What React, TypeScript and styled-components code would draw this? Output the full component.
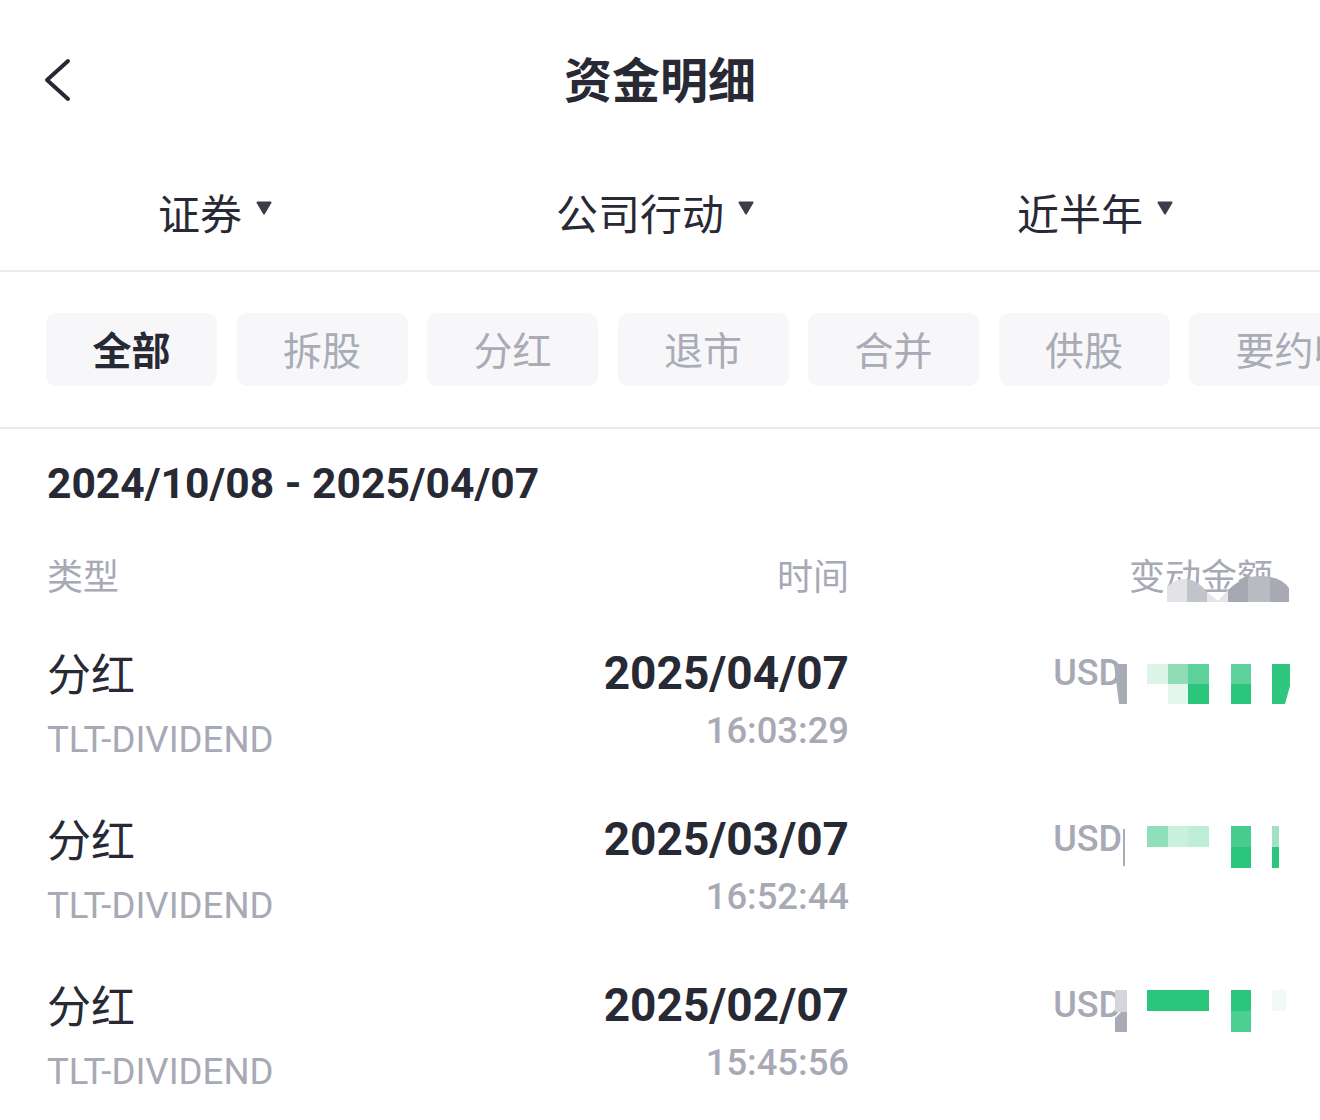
import React from "react";
import styled, { createGlobalStyle } from "styled-components";

const GlobalStyle = createGlobalStyle`
  html, body { margin: 0; padding: 0; background: #ffffff; }
  body { font-family: Roboto, "Noto Sans CJK SC", sans-serif; -webkit-font-smoothing: antialiased; }
  * { box-sizing: border-box; }
`;

const CJK = `"Noto Sans CJK SC", "Noto Sans", sans-serif`;
const NUM = `Roboto, "Noto Sans CJK SC", sans-serif`;
const DARK = "#272934";
const GRAY = "#a7a9b5";

const Page = styled.div`
  width: 1320px;
  min-height: 1120px;
  overflow: hidden;
  background: #fff;
`;

const Header = styled.header`
  height: 160px;
  padding-bottom: 6px;
  display: grid;
  grid-template-columns: 160px 1fr 160px;
  align-items: center;
`;

const BackButton = styled.button`
  border: 0;
  background: transparent;
  padding: 0 0 0 42px;
  width: 100px;
  height: 60px;
  display: flex;
  align-items: center;
  cursor: pointer;
  margin-top: 6px;
`;

const Title = styled.h1`
  margin: 0;
  text-align: center;
  font-family: ${CJK};
  font-size: 48px;
  font-weight: 700;
  line-height: 60px;
  color: ${DARK};
`;

const FilterBar = styled.div`
  height: 112px;
  padding-bottom: 6px;
  display: grid;
  grid-template-columns: repeat(3, 1fr);
  align-items: center;
  border-bottom: 2px solid #ececef;
`;

const FilterItem = styled.div`
  display: flex;
  align-items: center;
  justify-content: center;
  gap: 14px;
  font-family: ${CJK};
  font-size: 42px;
  line-height: 60px;
  color: ${DARK};
  transform: translateX(-5px);
`;

const Caret = styled.svg`
  width: 16px;
  height: 14px;
  margin-bottom: 8px;
  flex: none;
`;

const ChipRow = styled.div`
  display: flex;
  gap: 19.5px;
  padding: 41px 0 41px 46px;
  overflow: hidden;
  border-bottom: 2px solid #ececef;
`;

const Chip = styled.div<{ $active?: boolean }>`
  flex: none;
  height: 73px;
  padding: 0 46.5px 3px;
  border-radius: 10px;
  background: #f7f7f9;
  display: flex;
  align-items: center;
  font-family: ${CJK};
  font-size: 39px;
  font-weight: ${(p) => (p.$active ? 700 : 400)};
  color: ${(p) => (p.$active ? DARK : "#a9abb6")};
  white-space: nowrap;
`;

const RangeText = styled.div`
  padding: 24px 47px 0;
  font-family: ${NUM};
  font-size: 42.6px;
  font-weight: 700;
  line-height: 60px;
  color: ${DARK};
`;

const Table = styled.div`
  padding: 0 28px 0 47px;
`;

const HeadRow = styled.div`
  margin-top: 37px;
  height: 50px;
  display: grid;
  grid-template-columns: 1fr auto 443px;
  font-family: ${CJK};
  font-size: 36px;
  line-height: 48px;
  color: ${GRAY};
`;

const HeadRight = styled.div`
  text-align: right;
`;

const HeadAmount = styled.div`
  position: relative;
  text-align: right;
  padding-right: 19px;
`;

const HeadMosaic = styled.svg`
  position: absolute;
  right: 0;
  top: 20px;
  width: 130px;
  height: 34px;
`;

const Row = styled.div`
  height: 166px;
  padding-top: 43px;
  display: grid;
  grid-template-columns: 1fr auto 443px;
  align-items: start;
`;

const TypeCell = styled.div`
  display: flex;
  flex-direction: column;
`;

const TypeName = styled.div`
  font-family: ${CJK};
  font-size: 44px;
  line-height: 58px;
  color: ${DARK};
`;

const TypeCode = styled.div`
  margin-top: 14px;
  font-family: ${NUM};
  font-size: 36.6px;
  line-height: 50px;
  color: ${GRAY};
`;

const TimeCell = styled.div`
  display: flex;
  flex-direction: column;
  align-items: flex-end;
`;

const DateText = styled.div`
  font-family: ${NUM};
  font-size: 46px;
  font-weight: 700;
  line-height: 60px;
  color: ${DARK};
`;

const ClockText = styled.div`
  margin-top: 5px;
  font-family: ${NUM};
  font-size: 36.4px;
  font-weight: 500;
  line-height: 46px;
  color: ${GRAY};
`;

const AmountCell = styled.div`
  height: 60px;
  display: flex;
  justify-content: flex-end;
  align-items: flex-start;
`;

const Currency = styled.span`
  font-family: ${NUM};
  font-size: 36px;
  font-weight: 500;
  line-height: 60px;
  color: ${GRAY};
`;

const Mosaic = styled.svg`
  flex: none;
  width: 180px;
  height: 64px;
  margin-left: -10px;
  overflow: visible;
`;

type Block = { x?: number; y?: number; w?: number; h?: number; pts?: string; c: string };

const rows: { date: string; time: string; blocks: Block[] }[] = [
  {
    date: "2025/04/07",
    time: "16:03:29",
    blocks: [
      { pts: "2,21 15,21 15,61 7,61", c: "#a9abb5" },
      { x: 35, y: 21, w: 21, h: 20, c: "#dcf5e8" },
      { x: 56, y: 21, w: 20, h: 20, c: "#8fdcb6" },
      { x: 76, y: 21, w: 21, h: 20, c: "#5dd09b" },
      { x: 56, y: 41, w: 20, h: 20, c: "#e3f7ed" },
      { x: 76, y: 41, w: 21, h: 20, c: "#2bc57c" },
      { x: 119, y: 21, w: 20, h: 20, c: "#5ed19c" },
      { x: 119, y: 41, w: 20, h: 20, c: "#2bc57c" },
      { pts: "160,21 178,21 178,43 173,61 160,61", c: "#2fc77f" },
    ],
  },
  {
    date: "2025/03/07",
    time: "16:52:44",
    blocks: [
      { x: 11, y: 20, w: 2, h: 37, c: "#a9abb5" },
      { x: 35, y: 17, w: 21, h: 21, c: "#8fe0b9" },
      { x: 56, y: 17, w: 20, h: 21, c: "#c8f0dd" },
      { x: 76, y: 17, w: 21, h: 21, c: "#bfeed7" },
      { x: 119, y: 17, w: 20, h: 21, c: "#47cc8d" },
      { x: 119, y: 38, w: 20, h: 21, c: "#2bc57c" },
      { x: 160, y: 17, w: 7, h: 21, c: "#9fe3c2" },
      { x: 160, y: 38, w: 7, h: 21, c: "#2ec67e" },
    ],
  },
  {
    date: "2025/02/07",
    time: "15:45:56",
    blocks: [
      { x: 3, y: 15, w: 12, h: 22, c: "#d5d6dc" },
      { pts: "9,37 15,37 15,57 3,57 3,43", c: "#a9abb5" },
      { x: 35, y: 15, w: 62, h: 21, c: "#2bc57c" },
      { x: 119, y: 15, w: 20, h: 21, c: "#2bc57c" },
      { x: 119, y: 36, w: 20, h: 21, c: "#4dcf92" },
      { x: 160, y: 15, w: 14, h: 21, c: "#f3faf6" },
    ],
  },
];

const chips = ["全部", "拆股", "分红", "退市", "合并", "供股", "要约收购"];
const filters = ["证券", "公司行动", "近半年"];

const CaretIcon = () => (
  <Caret viewBox="0 0 16 14">
    <path d="M1.5 1.5 H14.5 L8 12.5 Z" fill="#3b3e4a" stroke="#3b3e4a" strokeWidth="2" strokeLinejoin="round" />
  </Caret>
);

const BlockShape = ({ b }: { b: Block }) =>
  b.pts ? (
    <polygon points={b.pts} fill={b.c} />
  ) : (
    <rect x={b.x} y={b.y} width={b.w} height={b.h} fill={b.c} />
  );

export default function App() {
  return (
    <Page>
      <GlobalStyle />
      <Header>
        <BackButton aria-label="返回">
          <svg width="30" height="44" viewBox="0 0 30 44">
            <path d="M26 3 L5 22 L26 41" fill="none" stroke={DARK} strokeWidth="4" strokeLinecap="round" strokeLinejoin="round" />
          </svg>
        </BackButton>
        <Title>资金明细</Title>
        <div />
      </Header>

      <FilterBar>
        {filters.map((f) => (
          <FilterItem key={f}>
            {f}
            <CaretIcon />
          </FilterItem>
        ))}
      </FilterBar>

      <ChipRow>
        {chips.map((c, i) => (
          <Chip key={c} $active={i === 0}>
            {c}
          </Chip>
        ))}
      </ChipRow>

      <RangeText>2024/10/08 - 2025/04/07</RangeText>

      <Table>
        <HeadRow>
          <div>类型</div>
          <HeadRight>时间</HeadRight>
          <HeadAmount>
            变动金额
            <HeadMosaic viewBox="0 0 130 34">
              <defs>
                <clipPath id="humps">
                  <path d="M5,32 L5,17 Q14,8 25,9 Q37,11 45,22 L56,31 L64,22 Q80,5 100,6 Q120,7 127,18 L127,32 Z" />
                </clipPath>
              </defs>
              <g clipPath="url(#humps)">
                <rect x="5" y="0" width="20" height="34" fill="#e2e3e7" />
                <rect x="25" y="0" width="20" height="34" fill="#c2c4cb" />
                <rect x="45" y="0" width="21" height="34" fill="#e4e5e9" />
                <rect x="66" y="0" width="20" height="34" fill="#a5a7b2" />
                <rect x="86" y="0" width="22" height="34" fill="#b9bbc3" />
                <rect x="108" y="0" width="19" height="34" fill="#a8aab4" />
              </g>
            </HeadMosaic>
          </HeadAmount>
        </HeadRow>

        {rows.map((r) => (
          <Row key={r.date}>
            <TypeCell>
              <TypeName>分红</TypeName>
              <TypeCode>TLT-DIVIDEND</TypeCode>
            </TypeCell>
            <TimeCell>
              <DateText>{r.date}</DateText>
              <ClockText>{r.time}</ClockText>
            </TimeCell>
            <AmountCell>
              <Currency>USD</Currency>
              <Mosaic viewBox="0 0 180 64">
                {r.blocks.map((b, i) => (
                  <BlockShape key={i} b={b} />
                ))}
              </Mosaic>
            </AmountCell>
          </Row>
        ))}
      </Table>
    </Page>
  );
}
